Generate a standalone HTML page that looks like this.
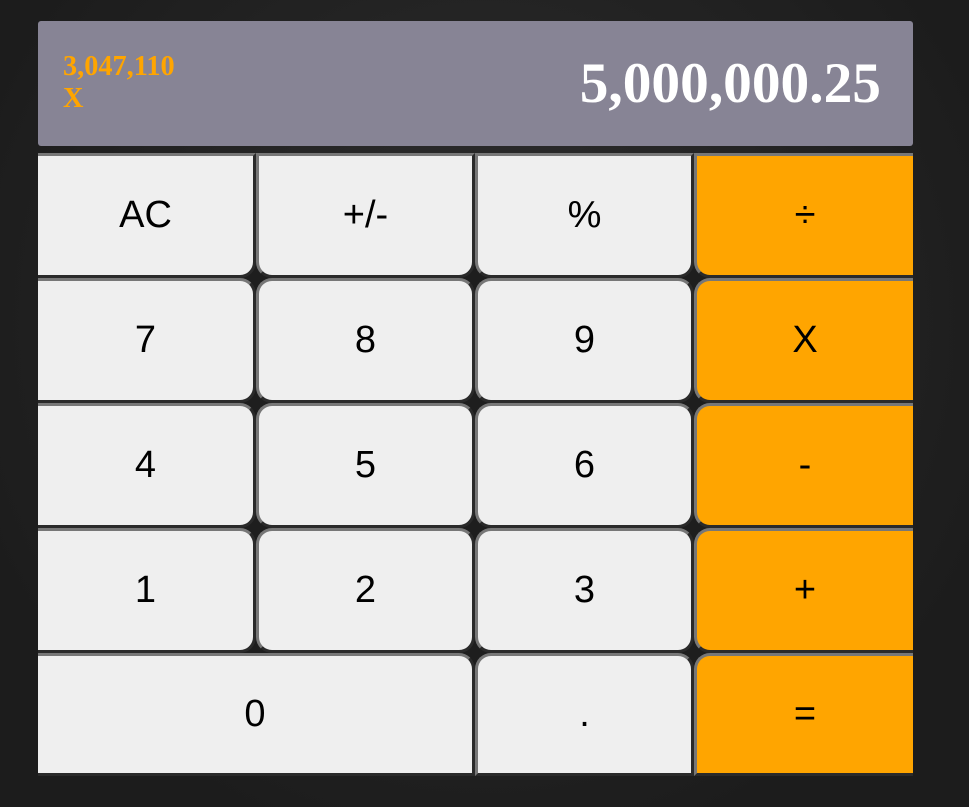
<!DOCTYPE html>
<html><head><style>
html,body{margin:0;padding:0;}
body{width:969px;height:807px;background:radial-gradient(circle at 50% 40%,#2e2e2e,#1c1c1c 80%);position:relative;overflow:hidden;font-family:"Liberation Sans",sans-serif;}
.disp{position:absolute;left:38px;top:21px;width:875px;height:125px;background:#878495;border-radius:3px;}
.prev{position:absolute;left:25px;top:30px;color:#ffa500;font:bold 28.3px/32px "Liberation Serif",serif;}
.cur{position:absolute;right:32px;top:31px;color:#fff;font:bold 57.4px/64px "Liberation Serif",serif;}
.grid{position:absolute;left:38px;top:153px;width:875px;height:623px;background:#1e1e1e;display:grid;grid-template-columns:218px 219px 219px 219px;grid-template-rows:125px 125px 125px 125px 123px;}
.b{box-sizing:border-box;background:#efefef;border:3px solid;border-color:#777 #2a2a2a #2a2a2a #777;border-radius:16px;display:flex;align-items:center;justify-content:center;font-size:38px;color:#000;}
.o{background:#ffa500;}
.z{grid-column:span 2;}
.first{border-left:none;border-top-left-radius:0;border-bottom-left-radius:0;}
.last{border-right:none;border-top-right-radius:0;border-bottom-right-radius:0;}
.top{border-top-left-radius:0;border-top-right-radius:0;}
.bot{border-bottom-left-radius:0;border-bottom-right-radius:0;}
</style></head><body>
<div class="disp"><div class="prev">3,047,110<br>X</div><div class="cur">5,000,000.25</div></div>
<div class="grid">
<div class="b first top">AC</div><div class="b top">+/-</div><div class="b top">%</div><div class="b o last top">÷</div>
<div class="b first">7</div><div class="b">8</div><div class="b">9</div><div class="b o last">X</div>
<div class="b first">4</div><div class="b">5</div><div class="b">6</div><div class="b o last">-</div>
<div class="b first">1</div><div class="b">2</div><div class="b">3</div><div class="b o last">+</div>
<div class="b z first bot">0</div><div class="b bot">.</div><div class="b o last bot">=</div>
</div>
</body></html>
